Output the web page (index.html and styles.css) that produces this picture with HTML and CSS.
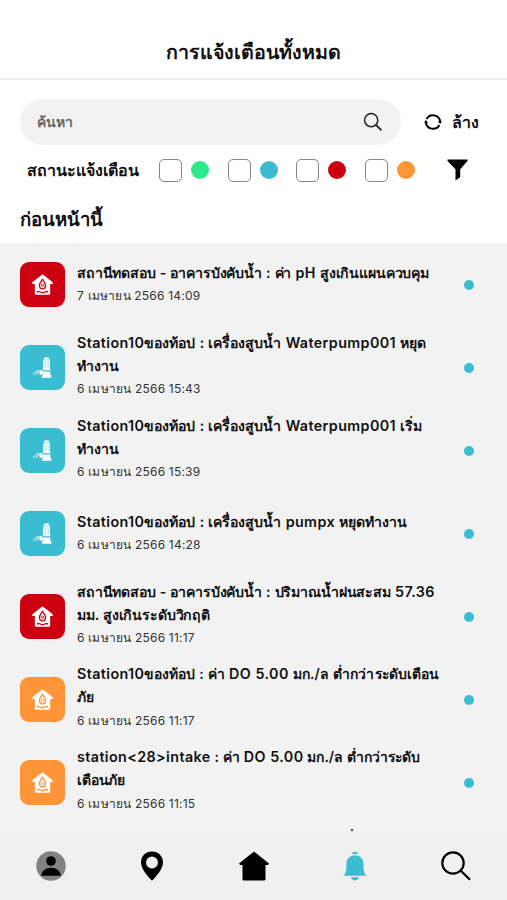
FILE: index.html
```html
<!DOCTYPE html>
<html lang="th">
<head>
<meta charset="utf-8">
<title>การแจ้งเตือนทั้งหมด</title>
<link rel="stylesheet" href="styles.css">
</head>
<body>
<svg width="0" height="0" class="defs">
  <symbol id="station" viewBox="0 0 44 44">
    <path fill="#fff" d="M22 12 12 19.700v1.800h2.500v9.300q0 1.200 1.200 1.200h12.600q1.200 0 1.200-1.200v-9.300H32v-1.800z"/>
    <path fill="none" stroke="currentColor" stroke-width="1.300" d="M22 17c-1.500 2.200-3 3.800-3 5.700 0 1.900 1.200 3.500 3 3.500s3-1.600 3-3.500c0-1.900-1.500-3.500-3-5.700zM16.500 29.600q1.400-1.200 2.700-.5l1.500.7q1.300.5 2.600 0l1.500-.7q1.300-.7 2.700.5"/>
    <circle cx="22" cy="22.800" r="1.200" fill="none" stroke="currentColor" stroke-width=".9"/>
  </symbol>
  <symbol id="pump" viewBox="0 0 44 44">
    <path fill="#fff" d="M23.500 14v-1.200q2.500-1.800 5 0V14l.8 1v8.300h-6.600V15zM22.200 23.300h7.600v1.500h-7.600zM19.200 24.500h1.300l2 1.300h7.100v3.500h1V32h-9.100v-2.700h1.300v-1.200l-2.300.9h-1.300z"/>
    <path fill="none" stroke="currentColor" stroke-width=".5" d="M24.600 15.500v7.500M27.500 15.500v7.500M23 14.600h6"/>
    <path fill="none" stroke="#fff" stroke-width=".9" d="M19 25.200q-4-.5-5.800 4M19 26.700q-2.500 0-3.300 2.500"/>
  </symbol>
</svg>
<div class="app">
  <header class="header"><h1>การแจ้งเตือนทั้งหมด</h1></header>
  <div class="tools">
    <div class="search"><span>ค้นหา</span>
      <svg width="20" height="20" viewBox="0 0 20 20" fill="none" stroke="#222" stroke-width="1.500"><circle cx="8.200" cy="8.200" r="6.600"/><path d="m13 13 5.500 5.300" stroke-width="1.800"/></svg>
    </div>
    <div class="clear">
      <svg width="18" height="18" viewBox="0 0 18 18" fill="none" stroke="#000" stroke-width="2"><path d="M2.600 6A7.300 7.300 0 0 1 16.200 8.500M15.400 12A7.300 7.300 0 0 1 1.800 9.500"/><path fill="#000" stroke="none" d="M13.800 8.300H18l-1.800 2.600zM4.200 9.700H0l1.800-2.600z"/></svg>
      <span>ล้าง</span>
    </div>
  </div>
  <div class="filters">
    <span class="flabel">สถานะแจ้งเตือน</span>
    <div class="opt"><i class="box"></i><i class="dot green"></i></div>
    <div class="opt"><i class="box"></i><i class="dot blue"></i></div>
    <div class="opt"><i class="box"></i><i class="dot red"></i></div>
    <div class="opt"><i class="box"></i><i class="dot orange"></i></div>
    <svg class="funnel" width="21" height="22" viewBox="0 0 21 22"><path d="M.5.500h20v1.600l-7.300 8.200v7.900L8.500 21.500V10.300L.5 2.100z"/></svg>
  </div>
  <h2>ก่อนหน้านี้</h2>
  <main class="list">
    <article class="row"><div class="tile red"><svg><use href="#station"/></svg></div><div class="text single"><p class="t plain">สถานีทดสอบ - อาคารบังคับน้ำ : ค่า <b>pH</b> สูงเกินแผนควบคุม</p><p class="d">7 เมษายน 2566 14:09</p></div><i class="unread"></i></article>
    <article class="row"><div class="tile blue"><svg><use href="#pump"/></svg></div><div class="text"><p class="t"><b>Station10</b>ของท้อป : เครื่องสูบน้ำ <b>Waterpump001</b> หยุด<br>ทำงาน</p><p class="d">6 เมษายน 2566 15:43</p></div><i class="unread"></i></article>
    <article class="row"><div class="tile blue"><svg><use href="#pump"/></svg></div><div class="text"><p class="t"><b>Station10</b>ของท้อป : เครื่องสูบน้ำ <b>Waterpump001</b> เริ่ม<br>ทำงาน</p><p class="d">6 เมษายน 2566 15:39</p></div><i class="unread"></i></article>
    <article class="row"><div class="tile blue"><svg><use href="#pump"/></svg></div><div class="text single"><p class="t"><b>Station10</b>ของท้อป : เครื่องสูบน้ำ <b>pumpx</b> หยุดทำงาน</p><p class="d">6 เมษายน 2566 14:28</p></div><i class="unread"></i></article>
    <article class="row"><div class="tile red"><svg><use href="#station"/></svg></div><div class="text"><p class="t plain">สถานีทดสอบ - อาคารบังคับน้ำ : ปริมาณน้ำฝนสะสม <b>57.36</b><br>มม. สูงเกินระดับวิกฤติ</p><p class="d">6 เมษายน 2566 11:17</p></div><i class="unread"></i></article>
    <article class="row"><div class="tile orange"><svg><use href="#station"/></svg></div><div class="text"><p class="t tight wide"><b>Station10</b>ของท้อป : ค่า <b>DO 5.00</b> มก./ล ต่ำกว่าระดับเตือน<br>ภัย</p><p class="d">6 เมษายน 2566 11:17</p></div><i class="unread"></i></article>
    <article class="row"><div class="tile orange"><svg><use href="#station"/></svg></div><div class="text"><p class="t tight"><b>station&lt;28&gt;intake</b> : ค่า <b>DO 5.00</b> มก./ล ต่ำกว่าระดับ<br>เตือนภัย</p><p class="d">6 เมษายน 2566 11:15</p></div><i class="unread"></i></article>
    <i class="peek"></i>
  </main>
  <nav class="nav">
    <a><svg width="30" height="30" viewBox="0 0 30 30"><circle cx="15" cy="15" r="14.700" fill="#828282"/><circle cx="15" cy="10" r="4.800"/><path d="M5.200 24.800c.5-5 4.500-8 9.800-8s9.300 3 9.800 8z"/></svg></a>
    <a><svg width="30" height="30" viewBox="0 0 30 30"><path fill-rule="evenodd" d="M15 .5C8.700.5 4 5.200 4 11.200c0 7 6.800 14 11 18.500 4.200-4.500 11-11.500 11-18.500C26 5.200 21.300.5 15 .5zm0 5a6 6 0 1 1 0 12 6 6 0 0 1 0-12z"/></svg></a>
    <a><svg width="30" height="30" viewBox="0 0 30 30"><path d="M15 .5 0 12.500l1 1.400h2.500v14.300q0 1.300 1.300 1.300h20.400q1.300 0 1.300-1.300V13.900H29l1-1.400z"/></svg></a>
    <a><svg width="30" height="30" viewBox="0 0 30 30" fill="#3abdd1"><path d="M11.500 3.200Q12.500.4 15 .4t3.500 2.800Q15 2.200 11.500 3.200zM15 4.200c5 0 8.500 3.600 8.500 8.300 0 6.500.3 9.500 3 12.300h-23c2.700-2.800 3-5.800 3-12.300C6.500 7.800 10 4.200 15 4.200zM11 26.200h8q-1.200 3.300-4 3.300t-4-3.300z"/></svg></a>
    <a><svg width="30" height="30" viewBox="0 0 30 30" fill="none" stroke="#000" stroke-width="2.200"><circle cx="12" cy="12" r="10.700"/><path d="m19.500 19.500 9.500 9.300"/></svg></a>
  </nav>
</div>
</body>
</html>
```
FILE: styles.css
```css
* { box-sizing: border-box; margin: 0; }
body { background: #fff; color: #111; font-family: Inter, sans-serif; }
.defs { display: block; }
svg { display: block; }
.app { height: 900px; display: flex; flex-direction: column; overflow: hidden; }
.header { height: 80px; flex: none; padding-top: 24px; border-bottom: 2px solid #eee; text-align: center; }
h1 { font-size: 19.600px; line-height: 56px; font-weight: 600; }
.tools { display: flex; align-items: center; height: 46px; margin-top: 19px; flex: none; padding-left: 20px; }
.search { width: 381px; height: 46px; border-radius: 23px; background: #f2f2f2; display: flex; align-items: center; justify-content: space-between; padding: 0 18px 0 17px; font-size: 14px; font-weight: 600; color: #666; }
.clear { display: flex; align-items: center; gap: 10px; margin-left: 23px; font-size: 16px; font-weight: 600; }
.filters { display: flex; align-items: center; height: 24px; margin-top: 13px; flex: none; padding-left: 27px; }
.flabel { width: 132px; font-size: 16px; font-weight: 600; white-space: nowrap; }
.opt { display: flex; align-items: center; gap: 9px; width: 68.500px; }
.box { width: 23px; height: 23px; border: 1.500px solid #888; border-radius: 5px; background: #fff; }
.dot { width: 18px; height: 18px; border-radius: 50%; }
.green { background: #2bea87; }
.blue { background: #3abdd1; color: #3abdd1; }
.red { background: #cc0011; color: #cc0011; }
.orange { background: #ff9438; color: #ff9438; }
.funnel { margin-left: 14px; }
h2 { height: 61px; flex: none; padding-left: 20px; font-size: 18.500px; line-height: 75px; font-weight: 600; }
.list { flex: 1; min-height: 0; overflow: hidden; background: #f2f2f2; }
.row { display: flex; align-items: center; height: 83px; padding: 0 33px 0 20px; }
.tile { width: 45px; height: 45px; border-radius: 9px; flex: none; }
.tile svg { width: 45px; height: 45px; }
.text { flex: 1; margin-left: 12px; padding-bottom: 4px; white-space: nowrap; }
.single { padding-bottom: 1px; }
.t { font-size: 14.100px; font-weight: 600; line-height: 23px; word-spacing: .700px; }
.t b { font-weight: 600; font-size: 14.300px; letter-spacing: .400px; line-height: 1; }
.plain { letter-spacing: -.140px; }
.tight { font-size: 13.900px; word-spacing: .400px; }
.wide { letter-spacing: .120px; }
.d { font-size: 12px; line-height: 23px; letter-spacing: .200px; color: #333; }
.unread { width: 10px; height: 10px; border-radius: 50%; background: #3abdd1; }
.peek { display: block; width: 2px; height: 2px; margin: 5px 0 0 351px; background: #444; }
.nav { height: 69px; flex: none; background: #f0f0f0; display: flex; }
.nav a { flex: 1; display: flex; justify-content: center; padding-top: 20px; }
```
